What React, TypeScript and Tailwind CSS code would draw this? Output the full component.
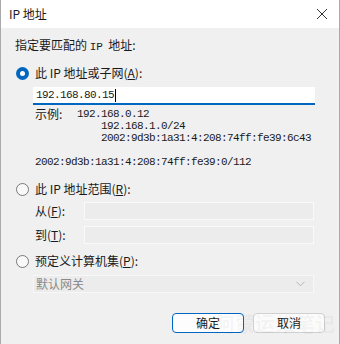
import React from "react";

const cjk = { fontFamily: '"Noto Sans CJK SC", "Liberation Sans", sans-serif' };
const mono = { fontFamily: '"Liberation Mono", "Noto Sans CJK SC", monospace' };

function Radio({ checked }: { checked?: boolean }) {
  return checked ? (
    <div className="w-[13px] h-[13px] rounded-full bg-[#0067c0] flex items-center justify-center">
      <div className="w-[5px] h-[5px] rounded-full bg-white" />
    </div>
  ) : (
    <div className="w-[13px] h-[13px] rounded-full border border-[#7a7a7a] bg-[#f8f8f8]" />
  );
}

export default function App() {
  return (
    <div
      className="relative w-[340px] h-[344px] bg-[#f0f0f0] border-l border-r border-[#aaaaaa] overflow-hidden text-[12px] text-[#1a1a1a]"
      style={cjk}
    >
      <div className="h-[28px] bg-white flex items-center justify-between pl-[8px] pr-[10px]">
        <span className="leading-[16px]">IP 地址</span>
        <svg width="12" height="12" viewBox="0 0 12 12" className="mr-[1px]">
          <path d="M1 1 L11 11 M11 1 L1 11" stroke="#333" strokeWidth="1" />
        </svg>
      </div>
      <div className="flex flex-col pl-[14px]">
        <div className="mt-[9px] h-[16px] leading-[16px]">
          指定要匹配的 <span style={mono} className="text-[11px]">IP</span>&nbsp; 地址:
        </div>
        <div className="mt-[12px] h-[16px] flex items-center">
          <div className="ml-[1px]"><Radio checked /></div>
          <span className="ml-[6px] leading-[16px]">
            此 IP 地址或子网(<span className="underline">A</span>):
          </span>
        </div>
        <div className="mt-[6px] ml-[18px] w-[282px] h-[18px] bg-white border-b-2 border-[#0067c0] flex items-center pl-[3px]">
          <span style={mono} className="text-[11px] tracking-[-0.6px] leading-[12px]">192.168.80.15</span>
          <span className="w-px h-[13px] bg-black ml-[1px]" />
        </div>
        <div className="mt-[3px] ml-[20px] flex flex-col text-[11px] tracking-[-0.6px]" style={mono}>
          <div className="h-[12px] leading-[12px] flex">
            <span style={cjk} className="text-[12px] tracking-normal w-[42px]">示例:</span>
            <span>192.168.0.12</span>
          </div>
          <div className="h-[12px] leading-[12px] pl-[66px]">192.168.1.0/24</div>
          <div className="h-[12px] leading-[12px] pl-[66px]">2002:9d3b:1a31:4:208:74ff:fe39:6c43</div>
          <div className="mt-[12px] h-[12px] leading-[12px]">2002:9d3b:1a31:4:208:74ff:fe39:0/112</div>
        </div>
        <div className="mt-[13px] h-[16px] flex items-center">
          <div className="ml-[1px]"><Radio /></div>
          <span className="ml-[6px] leading-[16px]">
            此 IP 地址范围(<span className="underline">R</span>):
          </span>
        </div>
        <div className="mt-[5px] ml-[20px] h-[18px] flex items-center">
          <span className="w-[49px] leading-[16px]">从(<span className="underline">F</span>):</span>
          <div className="w-[230px] h-[18px] bg-[#ececec] border border-[#f9f9f9]" />
        </div>
        <div className="mt-[6px] ml-[20px] h-[18px] flex items-center">
          <span className="w-[49px] leading-[16px]">到(<span className="underline">T</span>):</span>
          <div className="w-[230px] h-[18px] bg-[#ececec] border border-[#f9f9f9]" />
        </div>
        <div className="mt-[9px] h-[16px] flex items-center">
          <div className="ml-[1px]"><Radio /></div>
          <span className="ml-[6px] leading-[16px]">
            预定义计算机集(<span className="underline">P</span>):
          </span>
        </div>
        <div className="mt-[6px] ml-[18px] w-[281px] h-[18px] bg-[#ececec] border border-[#f7f7f7] flex items-center justify-between pl-[2px] pr-[8px]">
          <span className="text-[#8a8a8a] leading-[16px]">默认网关</span>
          <svg width="9" height="6" viewBox="0 0 9 6">
            <path d="M0.5 0.8 L4.5 4.8 L8.5 0.8" stroke="#b5b5b5" strokeWidth="1" fill="none" />
          </svg>
        </div>
        <div className="mt-[20px] flex justify-end gap-[9px] pr-[14px]">
          <button className="w-[72px] h-[20px] rounded-[4px] border border-[#0067c0] bg-[#fdfdfd] text-[12px] leading-[16px]">确定</button>
          <button className="w-[72px] h-[20px] rounded-[4px] border border-[#d0d0d0] bg-[#fbfbfb] text-[12px] leading-[16px]">取消</button>
        </div>
      </div>
      <div className="absolute left-[214px] top-[309px] text-[20px] font-bold text-[rgba(0,0,0,0.045)] pointer-events-none">
        阿蒙运维笔记
      </div>
    </div>
  );
}
